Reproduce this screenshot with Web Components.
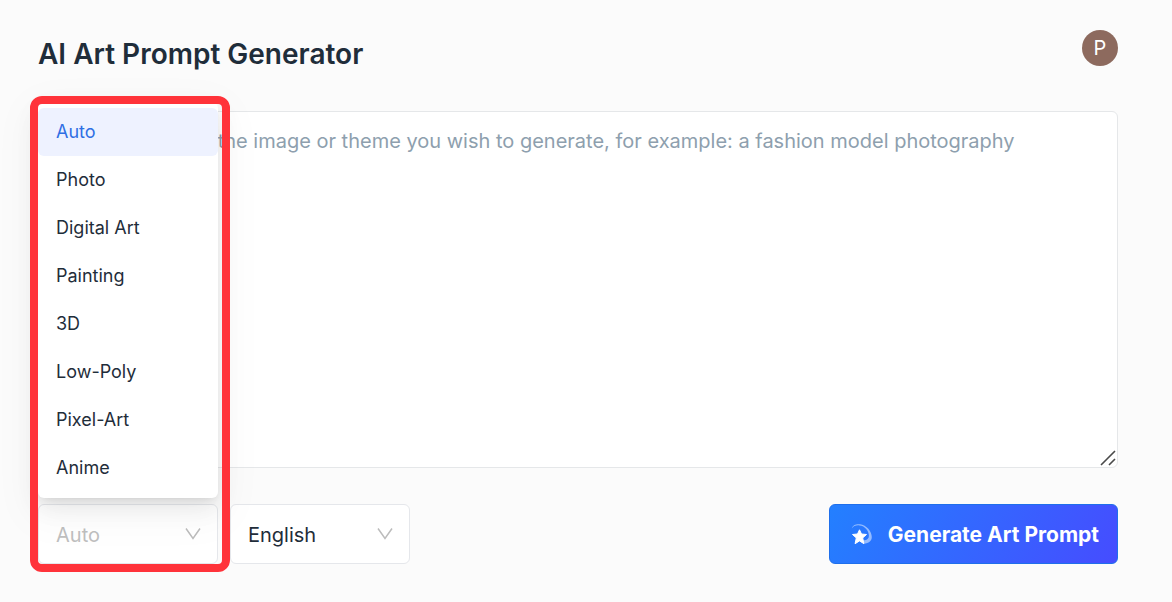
<!DOCTYPE html>
<html lang="en">
<head>
<meta charset="utf-8">
<meta name="viewport" content="width=device-width, initial-scale=1">
<title>AI Art Prompt Generator</title>
<style>
  body { margin: 0; background: #fbfbfb; color: #1f2d3a; font-family: Inter, "Liberation Sans", sans-serif; }
</style>
</head>
<body>
<art-generator>
  <page-header slot="header" initial="P">AI Art Prompt Generator</page-header>
  <prompt-box slot="prompt" placeholder="Please describe the image or theme you wish to generate, for example: a fashion model photography"></prompt-box>
  <pick-list slot="controls" label="Style" value="Auto" open options="Auto,Photo,Digital Art,Painting,3D,Low-Poly,Pixel-Art,Anime"></pick-list>
  <pick-list slot="controls" label="Language" value="English" options="English"></pick-list>
  <generate-button slot="action">Generate Art Prompt</generate-button>
</art-generator>

<script>
class BaseElement extends HTMLElement {
  connectedCallback() {
    if (this.shadowRoot) return;
    this.attachShadow({ mode: "open" }).innerHTML = this.render();
  }
}

customElements.define("art-generator", class extends BaseElement {
  render() {
    return `
      <style>
        :host { display: block; padding: 30px 54px 36px 38px; }
        main { display: flex; flex-direction: column; }
        .prompt { margin: 33px 0 36px; }
        .bar { display: flex; align-items: center; justify-content: space-between; }
        .controls { display: flex; gap: 12px; }
      </style>
      <main>
        <slot name="header"></slot>
        <div class="prompt"><slot name="prompt"></slot></div>
        <div class="bar">
          <div class="controls"><slot name="controls"></slot></div>
          <slot name="action"></slot>
        </div>
      </main>`;
  }
});

customElements.define("page-header", class extends BaseElement {
  render() {
    return `
      <style>
        :host { display: flex; justify-content: space-between; align-items: flex-start; }
        h1 { margin: 0; font-size: 28px; line-height: 48px; font-weight: 600; }
        button { width: 36px; height: 36px; padding: 0; border: 0; border-radius: 50%;
                 background: #8d6a5e; color: #fff; font: 400 20px/36px Inter, "Liberation Sans", sans-serif; }
      </style>
      <h1><slot></slot></h1>
      <button type="button" aria-label="Account">${this.getAttribute("initial")}</button>`;
  }
});

customElements.define("prompt-box", class extends BaseElement {
  render() {
    return `
      <style>
        :host { display: block; position: relative; }
        textarea { display: block; box-sizing: border-box; width: 100%; height: 357px; margin: 0;
                   padding: 14px 22px; border: 1px solid #e5e7e9; border-radius: 6px; background: #fff;
                   color: inherit; font: 400 20px/30px Inter, "Liberation Sans", sans-serif; resize: none; outline: 0; }
        textarea::placeholder { color: #8e9fae; opacity: 1; }
        svg { position: absolute; right: 2px; bottom: 2px; pointer-events: none; }
      </style>
      <textarea aria-label="Image description" placeholder="${this.getAttribute("placeholder")}"></textarea>
      <svg width="16" height="16" viewBox="0 0 16 16" fill="none" stroke="#4a4a4a" stroke-width="1.6" aria-hidden="true">
        <path d="M1 15 15 1M9 15l6-6"/>
      </svg>`;
  }
});

customElements.define("pick-list", class extends BaseElement {
  render() {
    const value = this.getAttribute("value");
    const options = this.getAttribute("options").split(",");
    const menu = `
      <div class="menu" role="listbox" aria-label="Style options">
        ${options.map(o => `<button type="button" role="option" aria-selected="${o === value}">${o}</button>`).join("")}
      </div>
      <div class="highlight"></div>`;
    return `
      <style>
        :host { display: block; position: relative; width: 180px; }
        select { appearance: none; display: block; box-sizing: border-box; width: 100%; height: 60px; margin: 0;
                 padding: 2px 48px 0 17px; border: 1px solid #e5e7eb; border-radius: 6px; background: #fff;
                 color: #1f2d3a; font: 400 20px/30px Inter, "Liberation Sans", sans-serif; outline: 0; }
        :host([open]) select { color: #bfbfbf; }
        svg { position: absolute; right: 17px; top: 23px; pointer-events: none; }
        .menu { position: absolute; z-index: 1; left: 0; right: 0; bottom: 66px; padding: 6px 0;
                border-radius: 6px; background: #fff;
                box-shadow: 0 9px 24px rgba(0,0,0,.08), 0 4px 9px -4px rgba(0,0,0,.12), 0 12px 42px 12px rgba(0,0,0,.03); }
        .menu button { display: block; width: 100%; height: 48px; padding: 0 18px; border: 0; border-radius: 6px;
                       background: none; color: #1f2d3a; text-align: left;
                       font: 400 18px/24px Inter, "Liberation Sans", sans-serif; }
        .menu button[aria-selected="true"] { background: #eef2ff; color: #2f6fe4; }
        .highlight { position: absolute; z-index: 2; inset: -408px -12px -8px -8px; border: 8px solid #ff333a;
                     border-radius: 12px; pointer-events: none; }
      </style>
      <select aria-label="${this.getAttribute("label")}">
        ${options.map(o => `<option${o === value ? " selected" : ""}>${o}</option>`).join("")}
      </select>
      <svg width="16" height="14" viewBox="0 0 16 14" fill="none" stroke="#bcbcbc" stroke-width="1.5" aria-hidden="true">
        <path d="M1 1.5 8 11.5 15 1.5"/>
      </svg>
      ${this.hasAttribute("open") ? menu : ""}`;
  }
});

customElements.define("generate-button", class extends BaseElement {
  render() {
    return `
      <style>
        :host { display: block; }
        button { display: flex; align-items: center; gap: 14px; box-sizing: border-box; height: 60px; margin: 0;
                 padding: 2px 18px 0 20px; border: 1px solid #1f6feb; border-radius: 6px;
                 background: linear-gradient(120deg, #2380ff, #464cff) border-box; color: #fff;
                 font: 700 21px/30px Inter, "Liberation Sans", sans-serif; }
      </style>
      <button type="button">
        <svg width="24" height="22" viewBox="0 0 24 22" fill="#fff" aria-hidden="true">
          <path opacity=".5" d="M1.800 4.500C2.500 1 6 -.2 10 .2c6.500 1 11.800 7 11.800 12.800 0 4-3.200 6.500-7.800 6.500l-.6-3.300c3.200.3 5.500-1.200 5.500-4.400C18.900 7 15 1.800 9.500 1.400 6 1 3.500 2 1.800 4.500z"/>
          <path stroke="#fff" stroke-width="1" stroke-linejoin="round" d="M9.500 5.800 11.500 10l5 .5-3.800 3.400 1.200 5.800-4.400-2.800-4.400 2.800 1.200-5.800L2.500 10.500l5-.5z"/>
        </svg>
        <span><slot></slot></span>
      </button>`;
  }
});
</script>
</body>
</html>
